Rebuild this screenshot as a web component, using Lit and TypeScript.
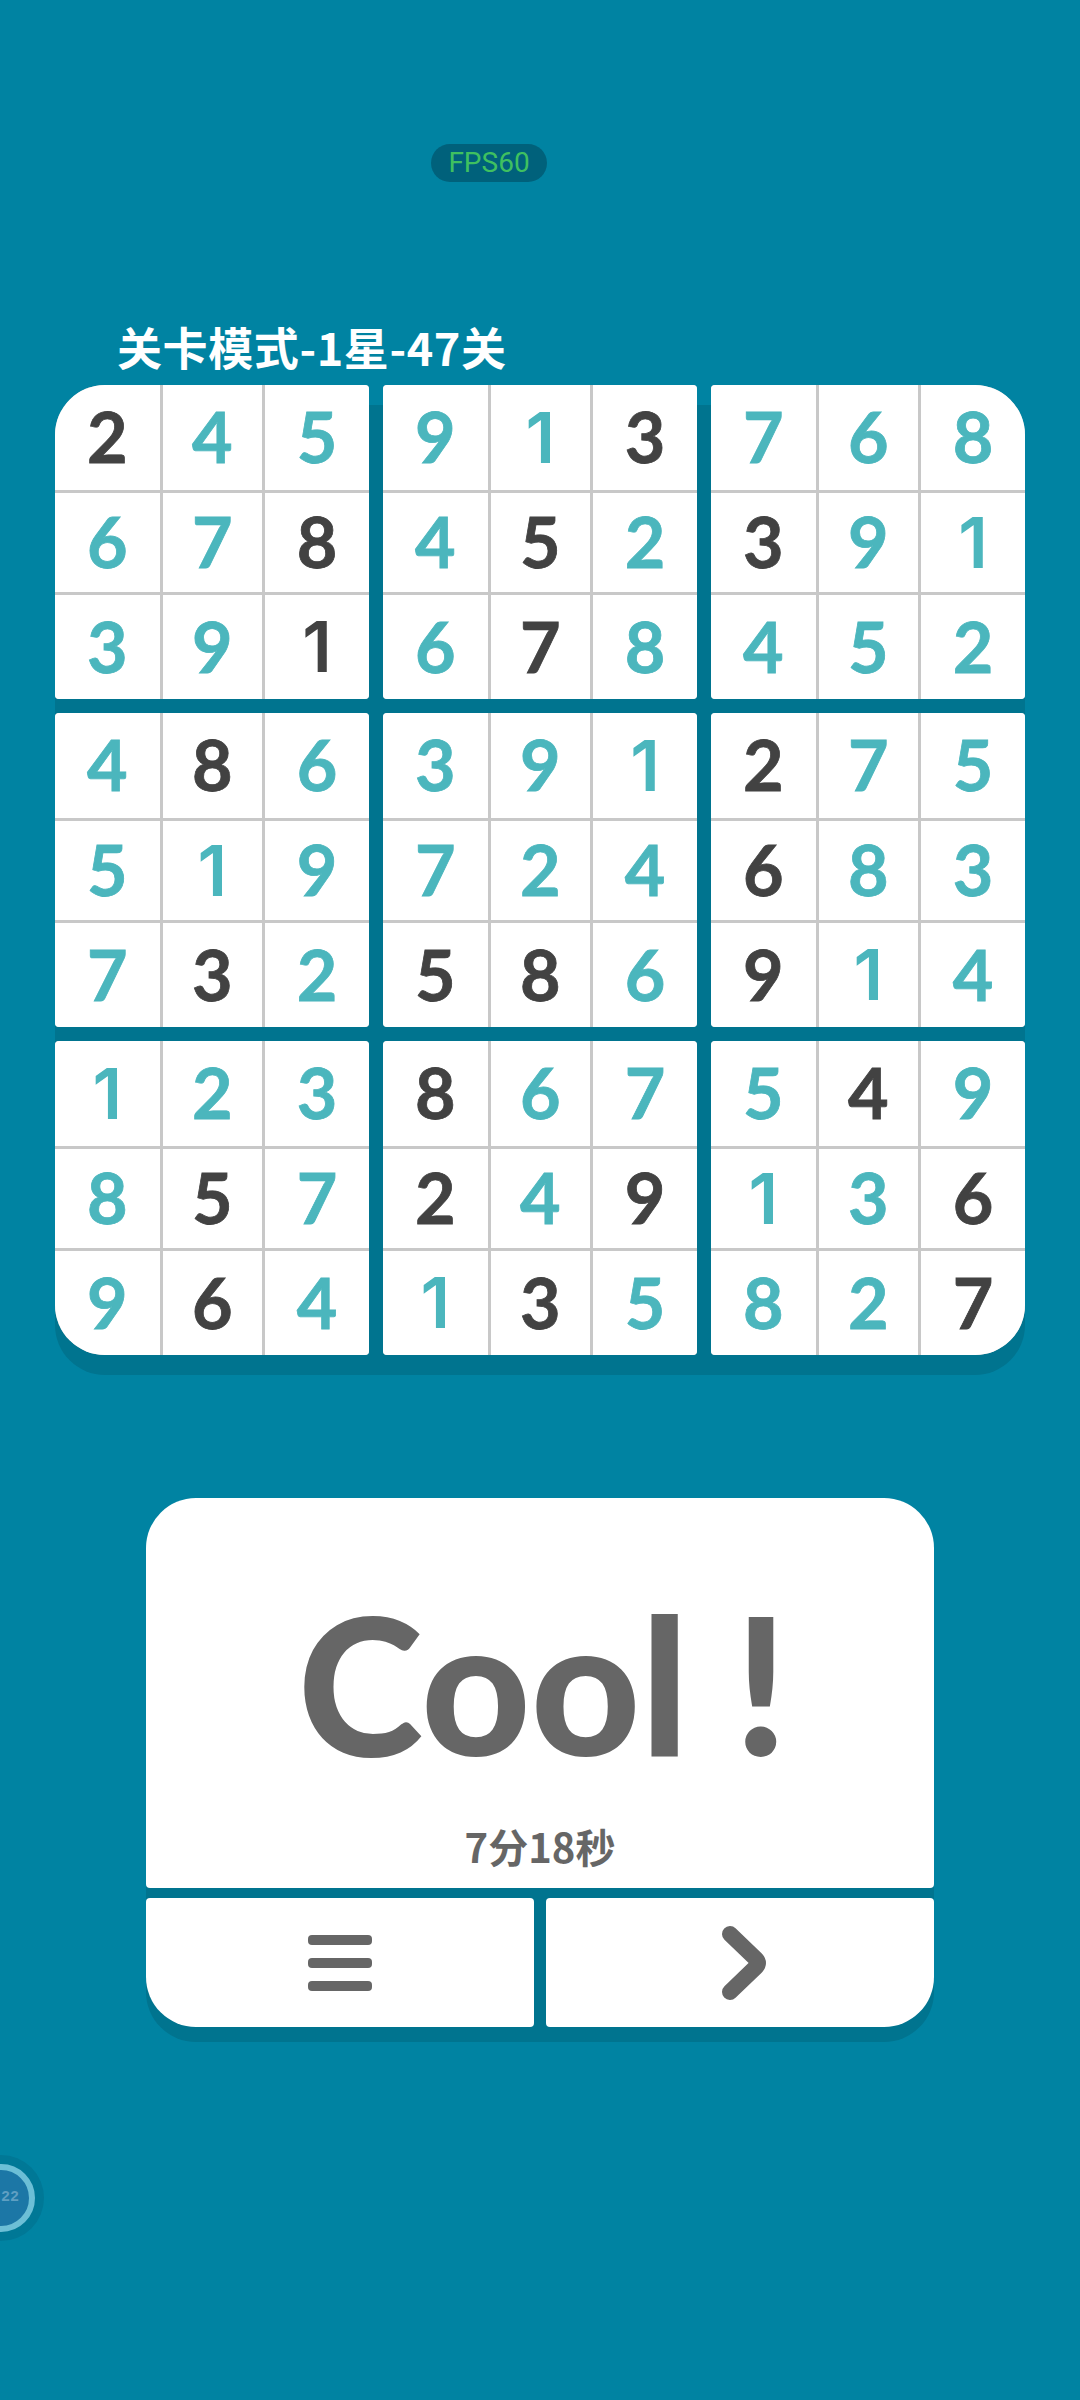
import { LitElement, html, css } from "lit";
import { customElement } from "lit/decorators.js";

const BLOCKS = [
  "2*45678*391*", "913*45*267*8", "7683*91452",
  "48*651973*2", "3917245*8*6", "2*756*839*14",
  "12385*796*4", "8*672*49*13*5", "54*9136*827*",
];

function parse(s: string) {
  const out: { v: string; dark: boolean }[] = [];
  for (const c of s) {
    if (c === "*") out[out.length - 1].dark = true;
    else out.push({ v: c, dark: false });
  }
  return out;
}

@customElement("app-root")
export class AppRoot extends LitElement {
  static styles = css`
    :host {
      display: block;
      width: 1080px;
      height: 2400px;
      overflow: hidden;
      position: relative;
      background: #0083a2;
      font-family: "Noto Sans CJK SC", "Liberation Sans", sans-serif;
    }
    .page {
      display: flex;
      flex-direction: column;
      align-items: flex-start;
      padding-top: 144px;
    }
    .fps {
      margin-left: 431px;
      width: 116px;
      height: 38px;
      border-radius: 19px;
      background: #00617b;
      color: #3fc060;
      font: 400 28px/38px Roboto, sans-serif;
      text-align: center;
    }
    .title {
      margin: 132px 0 6px 117px;
      height: 65px;
      color: #fff;
      font-size: 45px;
      font-weight: 700;
      line-height: 65px;
      letter-spacing: 0.6px;
      white-space: nowrap;
    }
    .board {
      position: relative;
      isolation: isolate;
      margin-left: 55px;
      display: grid;
      grid-template-columns: repeat(3, 314px);
      gap: 14px;
    }
    .board::before,
    .panel::before {
      content: "";
      position: absolute;
      left: 0;
      right: 0;
      z-index: -1;
      background: #00748f;
      border-radius: 50px;
    }
    .board::before {
      top: 20px;
      bottom: -20px;
    }
    .block {
      height: 314px;
      display: grid;
      grid-template-columns: 104.5px 99.5px 104px;
      grid-template-rows: 105px 99px 104px;
      gap: 3px;
      background: #c8c8c8;
      border-radius: 4px;
      overflow: hidden;
    }
    .tl { border-top-left-radius: 50px; }
    .tr { border-top-right-radius: 50px; }
    .bl { border-bottom-left-radius: 50px; }
    .br { border-bottom-right-radius: 50px; }
    .cell {
      background: #fff;
      display: flex;
      align-items: center;
      justify-content: center;
      color: #4bb6bd;
      font: 700 70px/1 Lato, sans-serif;
      -webkit-text-stroke: 0.8px currentColor;
      padding-bottom: 3px;
      box-sizing: border-box;
    }
    .cell.dark { color: #424242; }
    .cell.one {
      font: 600 70px/1 Inter, sans-serif;
      -webkit-text-stroke: 0;
      padding-bottom: 0;
    }
    .panel {
      position: relative;
      isolation: isolate;
      margin: 143px 0 0 146px;
      width: 788px;
      display: flex;
      flex-direction: column;
      gap: 10px;
    }
    .panel::before {
      top: 15px;
      bottom: -15px;
    }
    .card {
      height: 390px;
      background: #fff;
      border-radius: 50px 50px 4px 4px;
      color: #666;
      display: flex;
      flex-direction: column;
      align-items: center;
    }
    .cool {
      margin: 84px 0 0 6px;
      font: 900 190px/200px Lato, sans-serif;
      white-space: nowrap;
    }
    .time {
      margin-top: 36px;
      font-size: 40px;
      font-weight: 700;
      line-height: 56px;
    }
    .btns {
      display: flex;
      gap: 12px;
    }
    .btn {
      flex: 1;
      height: 129px;
      background: #fff;
      border-radius: 4px;
      display: flex;
      align-items: center;
      justify-content: center;
    }
    .btn.l { border-bottom-left-radius: 50px; }
    .btn.r { border-bottom-right-radius: 50px; }
    .bars {
      display: flex;
      flex-direction: column;
      gap: 13px;
    }
    .bars i {
      display: block;
      width: 64px;
      height: 10px;
      border-radius: 4px;
      background: #666;
    }
    .chev {
      display: block;
      width: 46px;
      height: 74px;
      margin-left: 9px;
    }
    .ball {
      position: absolute;
      left: -42px;
      top: 2155px;
      width: 86px;
      height: 86px;
      border-radius: 50%;
      background: #007896;
      display: flex;
      align-items: center;
      justify-content: center;
    }
    .ball div {
      box-sizing: border-box;
      width: 68px;
      height: 68px;
      border-radius: 50%;
      border: 6px solid #6cbfd6;
      background: #1c77a6;
      color: #5f9fc2;
      font: 700 15px/56px "Liberation Mono", monospace;
      text-align: center;
    }
    .ball span {
      position: relative;
      left: 9px;
    }
  `;

  render() {
    const corner = ["tl", "", "tr", "", "", "", "bl", "", "br"];
    return html`
      <div class="page">
        <div class="fps">FPS60</div>
        <div class="title">关卡模式-1星-47关</div>
        <div class="board">
          ${BLOCKS.map(
            (b, i) => html`<div class="block ${corner[i]}">
              ${parse(b).map(
                (c) => html`<div class="cell ${c.dark ? "dark" : ""} ${c.v === "1" ? "one" : ""}">${c.v}</div>`
              )}
            </div>`
          )}
        </div>
        <div class="panel">
          <div class="card">
            <div class="cool">Cool !</div>
            <div class="time">7分18秒</div>
          </div>
          <div class="btns">
            <div class="btn l">
              <div class="bars"><i></i><i></i><i></i></div>
            </div>
            <div class="btn r">
              <svg class="chev" viewBox="0 0 46 74">
                <path d="M8 8 L34 33 Q38 37 34 41 L8 66" fill="none" stroke="#666" stroke-width="16" stroke-linecap="round" stroke-linejoin="round" />
              </svg>
            </div>
          </div>
        </div>
      </div>
      <div class="ball"><div><span>22</span></div></div>
    `;
  }
}
